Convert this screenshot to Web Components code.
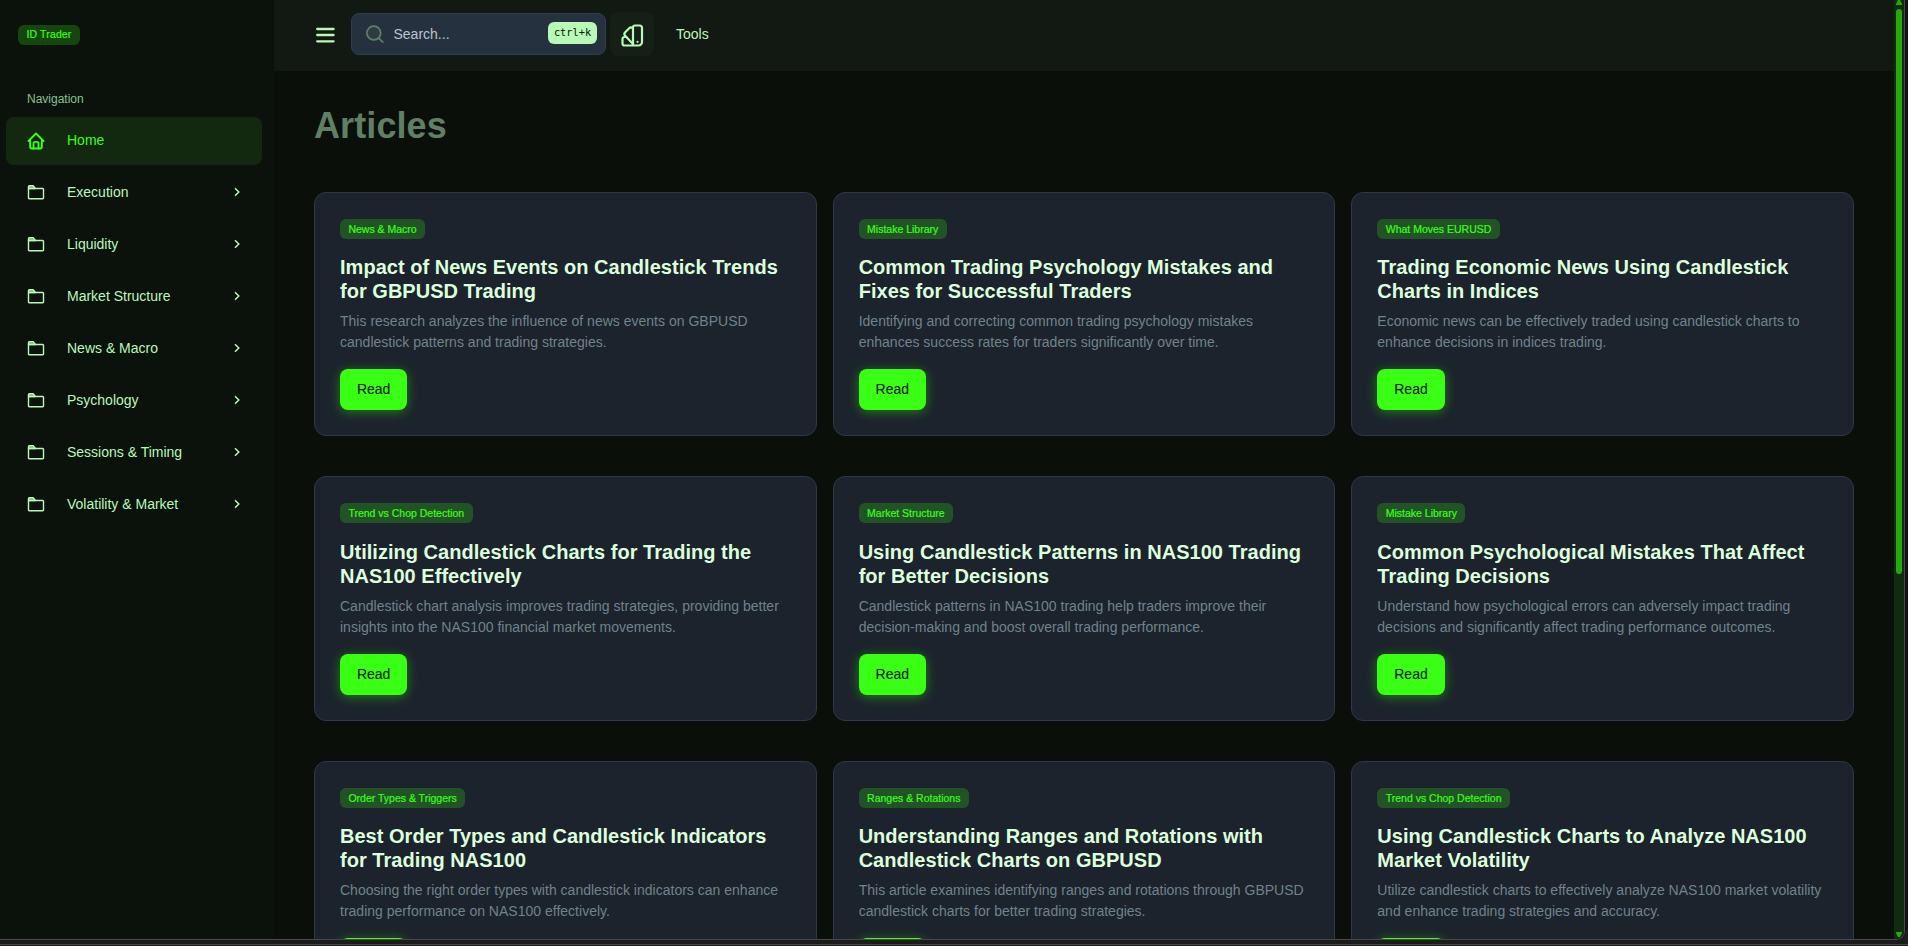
<!DOCTYPE html>
<html lang="en">
<head>
<meta charset="utf-8">
<title>ID Trader - Articles</title>
<style>
    :root {
        --neon: #39ff14;
        --mint: #b8f9b5;
        --heading: #dcffdc;
        --muted: #71828d;
        --card: #1c232c;
        --card-border: #2c394b;
        --radius: 8px;
    }
    html, body {
        margin: 0;
        height: 100%;
        overflow: hidden;
        background: #1c1c1c;
        font-family: "Liberation Sans", Arial, sans-serif;
        font-size: 14px;
        color: var(--mint);
    }
</style>
</head>
<body>
<app-shell>
    <side-bar slot="side">
        <nav-item icon="home" active>Home</nav-item>
        <nav-item icon="folder">Execution</nav-item>
        <nav-item icon="folder">Liquidity</nav-item>
        <nav-item icon="folder">Market Structure</nav-item>
        <nav-item icon="folder">News &amp; Macro</nav-item>
        <nav-item icon="folder">Psychology</nav-item>
        <nav-item icon="folder">Sessions &amp; Timing</nav-item>
        <nav-item icon="folder">Volatility &amp; Market</nav-item>
    </side-bar>
    <top-bar slot="top"></top-bar>
    <article-card tag="News &amp; Macro" heading="Impact of News Events on Candlestick Trends for GBPUSD Trading">This research analyzes the influence of news events on GBPUSD candlestick patterns and trading strategies.</article-card>
    <article-card tag="Mistake Library" heading="Common Trading Psychology Mistakes and Fixes for Successful Traders">Identifying and correcting common trading psychology mistakes enhances success rates for traders significantly over time.</article-card>
    <article-card tag="What Moves EURUSD" heading="Trading Economic News Using Candlestick Charts in Indices">Economic news can be effectively traded using candlestick charts to enhance decisions in indices trading.</article-card>
    <article-card tag="Trend vs Chop Detection" heading="Utilizing Candlestick Charts for Trading the NAS100 Effectively">Candlestick chart analysis improves trading strategies, providing better insights into the NAS100 financial market movements.</article-card>
    <article-card tag="Market Structure" heading="Using Candlestick Patterns in NAS100 Trading for Better Decisions">Candlestick patterns in NAS100 trading help traders improve their decision-making and boost overall trading performance.</article-card>
    <article-card tag="Mistake Library" heading="Common Psychological Mistakes That Affect Trading Decisions">Understand how psychological errors can adversely impact trading decisions and significantly affect trading performance outcomes.</article-card>
    <article-card tag="Order Types &amp; Triggers" heading="Best Order Types and Candlestick Indicators for Trading NAS100">Choosing the right order types with candlestick indicators can enhance trading performance on NAS100 effectively.</article-card>
    <article-card tag="Ranges &amp; Rotations" heading="Understanding Ranges and Rotations with Candlestick Charts on GBPUSD">This article examines identifying ranges and rotations through GBPUSD candlestick charts for better trading strategies.</article-card>
    <article-card tag="Trend vs Chop Detection" heading="Using Candlestick Charts to Analyze NAS100 Market Volatility">Utilize candlestick charts to effectively analyze NAS100 market volatility and enhance trading strategies and accuracy.</article-card>
</app-shell>

<script>
const ICONS = {
    home: `<svg width="20" height="20" viewBox="0 0 24 24" fill="none" stroke="currentColor" stroke-width="2.3" stroke-linecap="round" stroke-linejoin="round"><path d="M5 12H3l9-9 9 9h-2"/><path d="M5 12v7a2 2 0 0 0 2 2h10a2 2 0 0 0 2-2v-7"/><path d="M9 21v-6a2 2 0 0 1 2-2h2a2 2 0 0 1 2 2v6"/></svg>`,
    folder: `<svg width="20" height="20" viewBox="0 0 20 20" fill="none" stroke="currentColor" stroke-width="1.4" stroke-linejoin="round"><path d="M2.500 5.500h14.300a.7.7 0 0 1 .7.7v8.800a.7.7 0 0 1-.7.7H3.200a.7.7 0 0 1-.7-.7z"/><path d="M2.500 5.500V3.600a.8.8 0 0 1 .8-.8h3.900l2.200 2.700z" fill="currentColor" fill-opacity=".6"/></svg>`,
    chevron: `<svg width="14" height="14" viewBox="0 0 14 14" fill="none" stroke="currentColor" stroke-width="1.5"><path d="M5 3.200L8.800 7 5 10.800"/></svg>`,
    menu: `<svg width="22" height="20" viewBox="0 0 22 20" fill="none" stroke="currentColor" stroke-width="2.3" stroke-linecap="round"><path d="M3.200 4h16.400M3.200 10h16.400M3.200 16.300h16.400"/></svg>`,
    search: `<svg width="20" height="20" viewBox="0 0 20 20" fill="none" stroke="currentColor" stroke-width="1.7" stroke-linecap="round"><circle cx="8.800" cy="9" r="6.900" fill="#5f80651f"/><path d="M14 14.300l3.800 3.800"/></svg>`,
    swatch: `<svg width="24" height="24" viewBox="0 0 24 24" fill="none" stroke="currentColor" stroke-width="2.200" stroke-linecap="round" stroke-linejoin="round"><path d="M13 22.500V4.500a2 2 0 0 1 2-2h4.500a2.500 2.500 0 0 1 2.500 2.500v14a3.500 3.500 0 0 1-3.500 3.500H4.500a2 2 0 0 1-2-2V16a2 2 0 0 1 2-2h1.800"/><path d="M13 5.300l-.5-.3a2.600 2.600 0 0 0-3.300.3L5.200 9.300a2.500 2.500 0 0 0 0 3.500L13 21"/><path d="M17.500 18.800v.01"/></svg>`
};

class AppShell extends HTMLElement {
    constructor() {
        super();
        this.attachShadow({ mode: "open" });
        this.shadowRoot.innerHTML = `
        <style>
            :host {
                display: flex;
                flex-direction: column;
                height: 946px;
                background: #1c1c1c;
            }
            .window {
                display: flex;
                height: 939px;
                width: 1904px;
                border-right: 1px solid #48484a;
                border-bottom: 1px solid #48484a;
                border-bottom-right-radius: 9px;
                overflow: hidden;
                background: #0a0f0a;
            }
            .frame {
                background: linear-gradient(#111, #111) right top / 10px 930px no-repeat;
            }
            .edge {
                margin-top: 4px;
                height: 1px;
                background: #48484a;
            }
            .view {
                flex: 1;
                min-width: 0;
                display: flex;
                flex-direction: column;
            }
            main {
                flex: 1;
                min-height: 0;
                overflow: hidden;
                padding: 34px 40px 0;
            }
            h1 {
                margin: 0 0 45px;
                font-size: 36px;
                line-height: 42px;
                letter-spacing: .1px;
                color: #5f8065;
            }
            .grid {
                display: grid;
                grid-template-columns: repeat(3, 1fr);
                column-gap: 16px;
                row-gap: 40px;
            }
            .scroll {
                width: 10px;
                display: flex;
                flex-direction: column;
                align-items: center;
                background: #112b0f;
            }
            .scroll svg {
                display: block;
                fill: #27a80f;
            }
            .thumb {
                width: 6px;
                height: 565px;
                margin-top: 4px;
                border-radius: 3px;
                background: #27a80f;
            }
            .down {
                margin-top: auto;
                padding-bottom: 2px;
            }
        </style>
        <div class="frame">
            <div class="window">
                <slot name="side"></slot>
                <div class="view">
                    <slot name="top"></slot>
                    <main>
                        <h1>Articles</h1>
                        <div class="grid"><slot></slot></div>
                    </main>
                </div>
                <div class="scroll">
                    <svg width="6" height="5"><path d="M2 0h2l2 4v1H0V4z"/></svg>
                    <div class="thumb"></div>
                    <svg class="down" width="6" height="5"><path d="M0 0h6v1L4 5H2L0 1z"/></svg>
                </div>
            </div>
        </div>
        <div class="edge"></div>
        `;
    }
}

class SideBar extends HTMLElement {
    constructor() {
        super();
        this.attachShadow({ mode: "open" });
        this.shadowRoot.innerHTML = `
        <style>
            :host {
                display: block;
                width: 274px;
                flex: none;
                box-sizing: border-box;
                padding: 25px 12px 0 6px;
                background: #0b120c;
            }
            .brand {
                margin-left: 12px;
                line-height: 19px;
                letter-spacing: .15px;
            }
            .label {
                margin: 45px 0 9px 21px;
                font-size: 12px;
                line-height: 18px;
                color: #8cc08c;
            }
            nav {
                display: flex;
                flex-direction: column;
                gap: 4px;
            }
        </style>
        <tag-pill class="brand">ID Trader</tag-pill>
        <div class="label">Navigation</div>
        <nav><slot></slot></nav>
        `;
    }
}

class NavItem extends HTMLElement {
    constructor() {
        super();
        this.attachShadow({ mode: "open" });
    }

    connectedCallback() {
        const active = this.hasAttribute("active");
        this.shadowRoot.innerHTML = `
        <style>
            :host {
                display: flex;
                align-items: center;
                height: 48px;
                box-sizing: border-box;
                padding: 0 18px 2px 20px;
                border-radius: var(--radius);
                color: var(--mint);
            }
            :host([active]) {
                background: #12290f;
                color: var(--neon);
            }
            svg {
                display: block;
            }
            .icon {
                padding-top: 2px;
            }
            .text {
                flex: 1;
                margin-left: 21px;
                line-height: 20px;
                padding-bottom: 1px;
            }
        </style>
        <span class="icon">${ICONS[this.getAttribute("icon")]}</span>
        <span class="text"><slot></slot></span>
        ${active ? "" : ICONS.chevron}
        `;
    }
}

class TagPill extends HTMLElement {
    constructor() {
        super();
        this.attachShadow({ mode: "open" });
        this.shadowRoot.innerHTML = `
        <style>
            :host {
                display: block;
                width: fit-content;
                height: 20px;
                padding: 0 8.4px;
                border-radius: 6px;
                background: rgba(57, 255, 20, .22);
                color: var(--neon);
                font-size: 10.5px;
                line-height: 20px;
                white-space: nowrap;
                -webkit-text-stroke: .2px;
            }
        </style>
        <slot></slot>
        `;
    }
}

class TopBar extends HTMLElement {
    constructor() {
        super();
        this.attachShadow({ mode: "open" });
        this.shadowRoot.innerHTML = `
        <style>
            :host {
                display: flex;
                align-items: center;
                flex: none;
                height: 71px;
                box-sizing: border-box;
                padding: 0 40px 3px;
                background: #121812;
            }
            svg {
                display: block;
            }
            .menu {
                margin-right: 15px;
                padding-top: 2px;
            }
            .search {
                display: flex;
                align-items: center;
                width: 255px;
                height: 42px;
                box-sizing: border-box;
                padding: 0 8px 0 13px;
                border: 1px solid #303d50;
                border-radius: var(--radius);
                background: #26313f;
                color: #b9c5d0;
            }
            .search svg {
                color: #5f8065;
            }
            .search span {
                flex: 1;
                margin-left: 8.5px;
            }
            kbd {
                height: 22px;
                width: 49px;
                margin-bottom: 2px;
                border-radius: 6px;
                background: var(--mint);
                color: #0b120c;
                font-family: "DejaVu Sans Mono", monospace;
                font-size: 10.3px;
                line-height: 21px;
                text-align: center;
            }
            .theme {
                display: flex;
                align-items: center;
                justify-content: center;
                width: 44px;
                height: 44px;
                margin: 0 22px 0 4px;
                border-radius: var(--radius);
                background: #151f15;
            }
            .theme svg {
                padding-top: 2px;
            }
        </style>
        <div class="menu">${ICONS.menu}</div>
        <div class="search">${ICONS.search}<span>Search...</span><kbd>ctrl+k</kbd></div>
        <div class="theme">${ICONS.swatch}</div>
        <div>Tools</div>
        `;
    }
}

class ArticleCard extends HTMLElement {
    constructor() {
        super();
        this.attachShadow({ mode: "open" });
        this.shadowRoot.innerHTML = `
        <style>
            :host {
                display: block;
                height: 244.4px;
                box-sizing: border-box;
                padding: 26px 25px 0;
                border: 1px solid var(--card-border);
                border-radius: 12px;
                background: var(--card);
            }
            h2 {
                margin: 16.2px 0 8px;
                font-size: 20px;
                line-height: 24px;
                letter-spacing: .025px;
                color: var(--heading);
            }
            p {
                margin: 0 0 16px;
                line-height: 21px;
                letter-spacing: .01px;
                color: var(--muted);
            }
            button {
                display: block;
                width: 67.3px;
                height: 41px;
                padding: 0 0 1px;
                border: 0;
                border-radius: var(--radius);
                background: var(--neon);
                box-shadow: 0 2px 12px rgba(57, 255, 20, .4);
                color: #0a0f0a;
                font: inherit;
            }
        </style>
        <tag-pill></tag-pill>
        <h2></h2>
        <p><slot></slot></p>
        <button>Read</button>
        `;
    }

    connectedCallback() {
        this.shadowRoot.querySelector("tag-pill").textContent = this.getAttribute("tag");
        this.shadowRoot.querySelector("h2").textContent = this.getAttribute("heading");
    }
}

customElements.define("tag-pill", TagPill);
customElements.define("nav-item", NavItem);
customElements.define("side-bar", SideBar);
customElements.define("top-bar", TopBar);
customElements.define("article-card", ArticleCard);
customElements.define("app-shell", AppShell);
</script>
</body>
</html>
